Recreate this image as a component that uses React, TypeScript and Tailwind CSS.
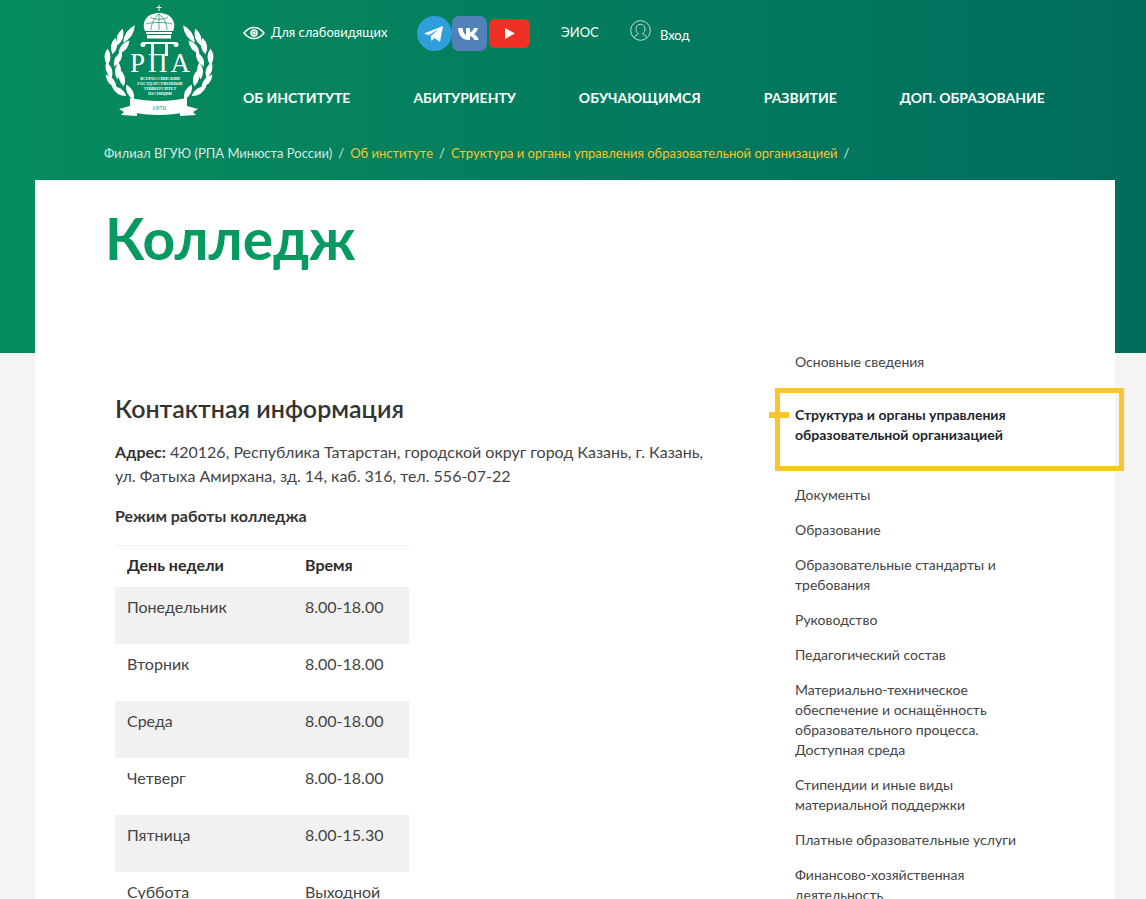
import React from "react";

const font = "font-['Lato','Carlito','Noto_Sans',sans-serif]";

const nav = ["ОБ ИНСТИТУТЕ", "АБИТУРИЕНТУ", "ОБУЧАЮЩИМСЯ", "РАЗВИТИЕ", "ДОП. ОБРАЗОВАНИЕ"];

const hours = [
  ["Понедельник", "8.00-18.00"],
  ["Вторник", "8.00-18.00"],
  ["Среда", "8.00-18.00"],
  ["Четверг", "8.00-18.00"],
  ["Пятница", "8.00-15.30"],
  ["Суббота", "Выходной"],
];

const sideMenu = [
  "Документы",
  "Образование",
  "Образовательные стандарты и требования",
  "Руководство",
  "Педагогический состав",
  "Материально-техническое обеспечение и оснащённость образовательного процесса. Доступная среда",
  "Стипендии и иные виды материальной поддержки",
  "Платные образовательные услуги",
  "Финансово-хозяйственная деятельность",
];

// left half of the wreath: x, y, rotation, length
const leaves = [
  [16, 32, 18, 18],
  [25, 29, 34, 21],
  [10, 41, 10, 17],
  [20, 42, 40, 17],
  [3.500, 52, 0, 17],
  [14, 54, 28, 17],
  [5, 65, -18, 17],
  [14, 66, 5, 17],
  [7, 76, -40, 17],
  [18, 73, -12, 17],
  [15, 86, -56, 18],
  [26, 87, -27, 17],
];

const Leaf = ({ x, y, r, l }: { x: number; y: number; r: number; l: number }) => (
  <path
    d={`M0 ${-l / 2}Q6 0 0 ${l / 2}Q-6 0 0 ${-l / 2}z`}
    fill="#fff"
    transform={`translate(${x} ${y}) rotate(${r})`}
  />
);

const Logo = () => (
  <svg width="110" height="112" viewBox="0 0 110 112" className="shrink-0">
    {/* cross and crown */}
    <path d="M55 0v6M52.500 2.500h5" stroke="#fff" strokeWidth="1" />
    <path d="M41 26c-4-9 2-18 14-18s18 9 14 18z" fill="#fff" />
    <path d="M47 25c0-6 3-12 8-16M63 25c0-6-3-12-8-16M55 9v16M42 19c6-2 20-2 26 0M46 12c3 3 15 3 18 0" stroke="#088b5d" strokeWidth="0.700" fill="none" />
    <rect x="42" y="27" width="26" height="2" fill="#fff" />
    <rect x="43" y="30" width="24" height="3.500" fill="#fff" />
    {/* pediment above the П */}
    <path d="M39 37h33v2H39z" fill="#fff" />
    <circle cx="39" cy="39.500" r="2.500" fill="#fff" />
    <circle cx="72" cy="39.500" r="2.500" fill="#fff" />
    <rect x="47" y="39" width="3" height="12" fill="#fff" />
    <rect x="61" y="39" width="3" height="12" fill="#fff" />
    <text x="26" y="67" fill="#fff" fontSize="27" fontFamily="Liberation Serif, serif" textLength="60">РПА</text>
    <g fill="#fff" fontFamily="Liberation Serif, serif" fontSize="4.200" fontWeight="700" textAnchor="middle">
      <text x="56" y="75">ВСЕРОССИЙСКИЙ</text>
      <text x="56" y="80">ГОСУДАРСТВЕННЫЙ</text>
      <text x="56" y="85">УНИВЕРСИТЕТ</text>
      <text x="56" y="90">ЮСТИЦИИ</text>
    </g>
    {/* wreath */}
    {leaves.map(([x, y, r, l], i) => (
      <g key={i}>
        <Leaf x={x} y={y} r={r} l={l} />
        <Leaf x={110 - x} y={y} r={-r} l={l} />
      </g>
    ))}
    {/* ribbon */}
    <path d="M26 93c20 4 38 4 57 0v14c-19 4-37 4-57 0z" fill="#fff" />
    <path d="M26 101l-11 3 5 3-3 3 16 1v-6zM83 101l11 3-5 3 3 3-16 1v-6z" fill="#fff" />
    <text x="55" y="105" textAnchor="middle" fontSize="7" fill="#088b5d" fontFamily="Liberation Serif, serif">1970</text>
  </svg>
);

const Eye = () => (
  <svg width="22" height="14" viewBox="0 0 22 14" fill="none" stroke="#fff" strokeWidth="1.500">
    <path d="M1 7c3-3.800 6-5.500 10-5.500S18 3.200 21 7c-3 3.800-6 5.500-10 5.500S4 10.800 1 7z" />
    <circle cx="11" cy="7" r="3" />
    <circle cx="11" cy="7" r="1" fill="#fff" />
  </svg>
);

const Telegram = () => (
  <svg width="35" height="35" viewBox="0 0 35 35">
    <circle cx="17.500" cy="17.500" r="17.500" fill="#2f9fdc" />
    <path d="M7 17.500l19-7.500-3 16-5.500-4-3 3-.8-5 8.300-7-10.500 6.300z" fill="#fff" />
  </svg>
);

const Vk = () => (
  <svg width="35" height="35" viewBox="0 0 35 35">
    <rect width="35" height="35" rx="7" fill="#5181b8" />
    <path d="M6 12h4.500c.5 4 2 6.500 3.500 7v-7h4v4.500c1.700-.5 3.200-2.500 4-4.500h4c-.7 2.800-2.500 5-4 6 1.800.9 3.900 3 4.800 6h-4.500c-.8-2-2.400-3.600-4.300-4v4h-1.500C10.500 24 6.500 19.500 6 12z" fill="#fff" />
  </svg>
);

const Youtube = () => (
  <svg width="41" height="29" viewBox="0 0 41 29">
    <rect width="41" height="29" rx="6" fill="#ee3124" />
    <path d="M16 9l10 5.500L16 20z" fill="#fff" />
  </svg>
);

const UserIcon = () => (
  <svg width="21" height="21" viewBox="0 0 21 21" fill="none" stroke="#c9dcd6" strokeWidth="1" className="-mt-[5px]">
    <circle cx="10.500" cy="10.500" r="9.800" />
    <path d="M4.500 18c.5-2.800 2.500-3.500 4-4.200-1.500-1-2.500-3-2.500-5.300C6 6 8 4.300 10.500 4.300S15 6 15 8.500c0 2.300-1 4.300-2.500 5.300 1.500.7 3.500 1.400 4 4.200" />
  </svg>
);

const Header = () => (
  <div className="h-[353px] bg-gradient-to-r from-[#078c5d] to-[#016d5d]">
    <div className="flex pl-[104px] pt-[5px]">
      <Logo />
      <div className="ml-[29px] flex flex-col">
        <div className="flex h-[56px] items-center text-[13px] text-white">
          <Eye />
          <span className="ml-[6px] w-[146px]">Для слабовидящих</span>
          <Telegram />
          <Vk />
          <span className="ml-[2px]">
            <Youtube />
          </span>
          <span className="ml-[31px] -mt-[1px] w-[69px]">ЭИОС</span>
          <UserIcon />
          <span className="ml-[9px] mt-[5px]">Вход</span>
        </div>
        <div className="mt-[26px] flex gap-[63px] text-[14px] font-bold text-white">
          {nav.map((n) => (
            <span key={n}>{n}</span>
          ))}
        </div>
      </div>
    </div>
    <div className="mt-[27px] flex gap-[6px] pl-[104px] text-[13px] text-[#d9e8e2]">
      <span>Филиал ВГУЮ (РПА Минюста России)</span>
      <span>/</span>
      <span className="text-[#f7c52d]">Об институте</span>
      <span>/</span>
      <span className="text-[#f7c52d]">Структура и органы управления образовательной организацией</span>
      <span>/</span>
    </div>
  </div>
);

const HoursTable = () => (
  <table className="mt-[17px] w-[294px] table-fixed border-t border-[#eeeeee] text-[16px] text-[#444444]">
    <thead>
      <tr className="h-[41px] text-left font-bold text-[#2b2b2b]">
        <th className="w-[190px] pb-[2px] pl-[12px]">День недели</th>
        <th className="pb-[2px]">Время</th>
      </tr>
    </thead>
    <tbody>
      {hours.map(([day, time], i) => (
        <tr key={day} className={i % 2 === 0 ? "h-[57px] bg-[#f1f1f1] align-top" : "h-[57px] align-top"}>
          <td className="pl-[12px] pt-[8px]">{day}</td>
          <td className="pt-[8px]">{time}</td>
        </tr>
      ))}
    </tbody>
  </table>
);

const SideMenu = () => (
  <div className="relative w-[320px] shrink-0 pt-[172px] text-[14px] leading-[20px] text-[#444444]">
    <div>Основные сведения</div>
    <div className="mt-[33px] h-[60px] w-[240px] font-bold text-[#22252b]">
      Структура и органы управления образовательной организацией
    </div>
    {/* yellow frame drawn over the menu item */}
    <div className="absolute -left-[20px] top-[208px] h-[83px] w-[349px] border-[5px] border-[#fdc52c]" />
    <div className="absolute -left-[26px] top-[232px] h-[6px] w-[20px] bg-[#fdc52c]" />
    <div className="mt-[20px] flex w-[225px] flex-col gap-[15px]">
      {sideMenu.map((m) => (
        <div key={m}>{m}</div>
      ))}
    </div>
  </div>
);

export default function App() {
  return (
    <div className={`h-[899px] overflow-hidden bg-[#f5f4f2] ${font}`}>
      <Header />
      <div className="mx-[35px] -mt-[173px] flex w-[1080px] bg-white">
        <div className="w-[760px] shrink-0">
          <h1 className="ml-[70px] mt-[20px] text-[57px] font-bold leading-[76px] text-[#069a60]">Колледж</h1>
          <div className="pl-[80px] pt-[116px]">
            <h2 className="text-[25px] font-semibold leading-[32px] text-[#333333]">Контактная информация</h2>
            <p className="mt-[16px] w-[600px] text-[16px] leading-[24px] text-[#444444]">
              <b className="text-[#333333]">Адрес:</b> 420126, Республика Татарстан, городской округ город Казань, г. Казань, ул. Фатыха Амирхана, зд. 14, каб. 316, тел. 556-07-22
            </p>
            <p className="mt-[16px] text-[16px] font-bold leading-[24px] text-[#333333]">Режим работы колледжа</p>
            <HoursTable />
          </div>
        </div>
        <SideMenu />
      </div>
    </div>
  );
}
